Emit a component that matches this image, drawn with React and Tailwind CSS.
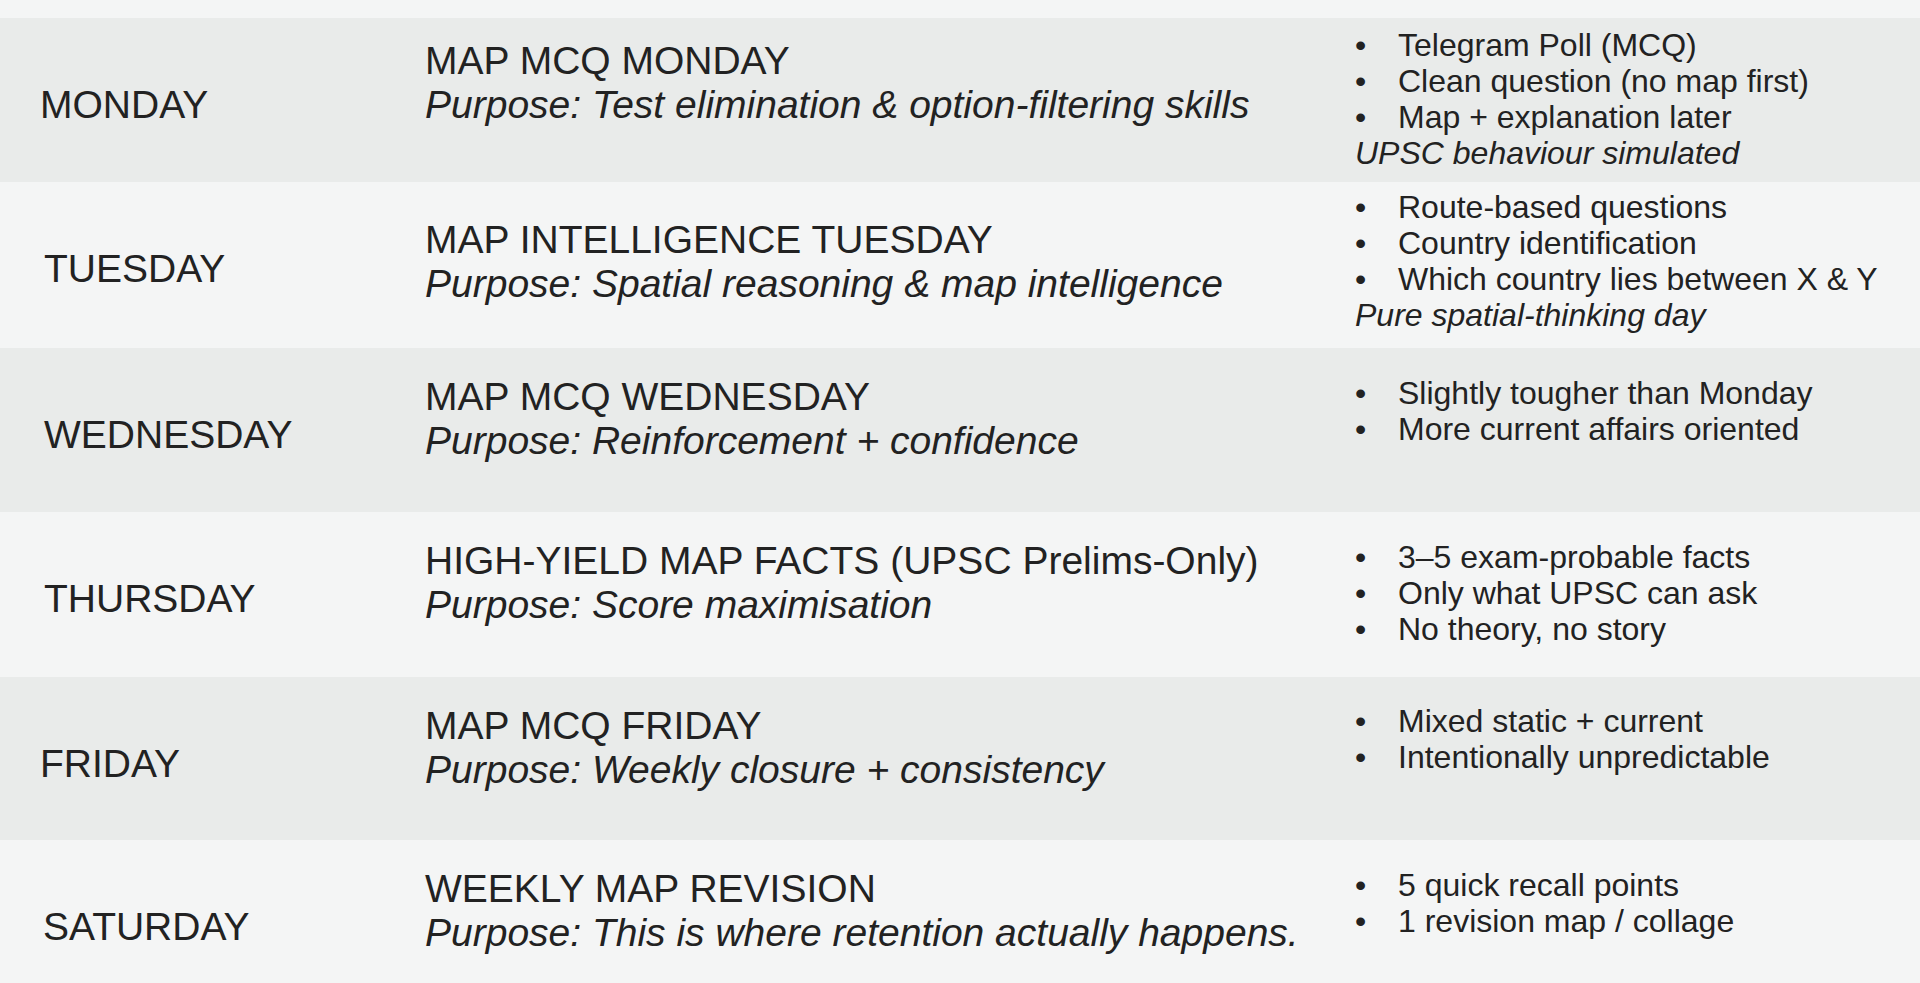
import React from 'react';

const rows = [
  {
    day: 'MONDAY',
    title: 'MAP MCQ MONDAY',
    purpose: 'Purpose: Test elimination & option-filtering skills',
    points: ['Telegram Poll (MCQ)', 'Clean question (no map first)', 'Map + explanation later'],
    note: 'UPSC behaviour simulated',
    bg: 'bg-[#e9ebea]',
    h: 'h-[164px]',
    dayPad: 'pl-[40px]',
    titlePad: 'pt-[21px]',
    pointsPad: 'pt-[9px]',
  },
  {
    day: 'TUESDAY',
    title: 'MAP INTELLIGENCE TUESDAY',
    purpose: 'Purpose: Spatial reasoning & map intelligence',
    points: ['Route-based questions', 'Country identification', 'Which country lies between X & Y'],
    note: 'Pure spatial-thinking day',
    bg: 'bg-[#f4f5f5]',
    h: 'h-[166px]',
    dayPad: 'pl-[44px]',
    titlePad: 'pt-[36px]',
    pointsPad: 'pt-[7px]',
  },
  {
    day: 'WEDNESDAY',
    title: 'MAP MCQ WEDNESDAY',
    purpose: 'Purpose: Reinforcement + confidence',
    points: ['Slightly tougher than Monday', 'More current affairs oriented'],
    bg: 'bg-[#e9ebea]',
    h: 'h-[164px]',
    dayPad: 'pl-[44px]',
    titlePad: 'pt-[27px]',
    pointsPad: 'pt-[27px]',
  },
  {
    day: 'THURSDAY',
    title: 'HIGH-YIELD MAP FACTS (UPSC Prelims-Only)',
    purpose: 'Purpose: Score maximisation',
    points: ['3–5 exam-probable facts', 'Only what UPSC can ask', 'No theory, no story'],
    bg: 'bg-[#f4f5f5]',
    h: 'h-[165px]',
    dayPad: 'pl-[44px]',
    titlePad: 'pt-[27px]',
    pointsPad: 'pt-[27px]',
  },
  {
    day: 'FRIDAY',
    title: 'MAP MCQ FRIDAY',
    purpose: 'Purpose: Weekly closure + consistency',
    points: ['Mixed static + current', 'Intentionally unpredictable'],
    bg: 'bg-[#e9ebea]',
    h: 'h-[163px]',
    dayPad: 'pl-[40px]',
    titlePad: 'pt-[27px]',
    pointsPad: 'pt-[26px]',
  },
  {
    day: 'SATURDAY',
    title: 'WEEKLY MAP REVISION',
    purpose: 'Purpose: This is where retention actually happens.',
    points: ['5 quick recall points', '1 revision map / collage'],
    bg: 'bg-[#f4f5f5]',
    h: 'h-[164px]',
    dayPad: 'pl-[43px]',
    titlePad: 'pt-[27px]',
    pointsPad: 'pt-[27px]',
  },
];

const App = () => {
  return (
    <div className="w-[1920px] h-[983px] overflow-hidden bg-[#f4f5f5] text-[#222] font-['Liberation_Sans',Arial,sans-serif]">
      {/* top strip */}
      <div className="h-[18px] bg-[#f4f5f5]" />

      {rows.map((row) => (
        <div key={row.day} className={`grid grid-cols-[425px_930px_1fr] ${row.bg} ${row.h}`}>
          {/* Day */}
          <div className={`${row.dayPad} pt-[65px] text-[39px] leading-[44px]`}>
            {row.day}
          </div>

          {/* Title + purpose */}
          <div className={`${row.titlePad} text-[39px] leading-[44px]`}>
            <div>{row.title}</div>
            <div className="italic">{row.purpose}</div>
          </div>

          {/* Points */}
          <div className={`${row.pointsPad} text-[32px] leading-[36px]`}>
            {row.points.map((p) => (
              <div key={p} className="flex">
                <span className="w-[43px]">•</span>
                <span>{p}</span>
              </div>
            ))}
            {row.note && <div className="italic">{row.note}</div>}
          </div>
        </div>
      ))}
    </div>
  );
};

export default App;
